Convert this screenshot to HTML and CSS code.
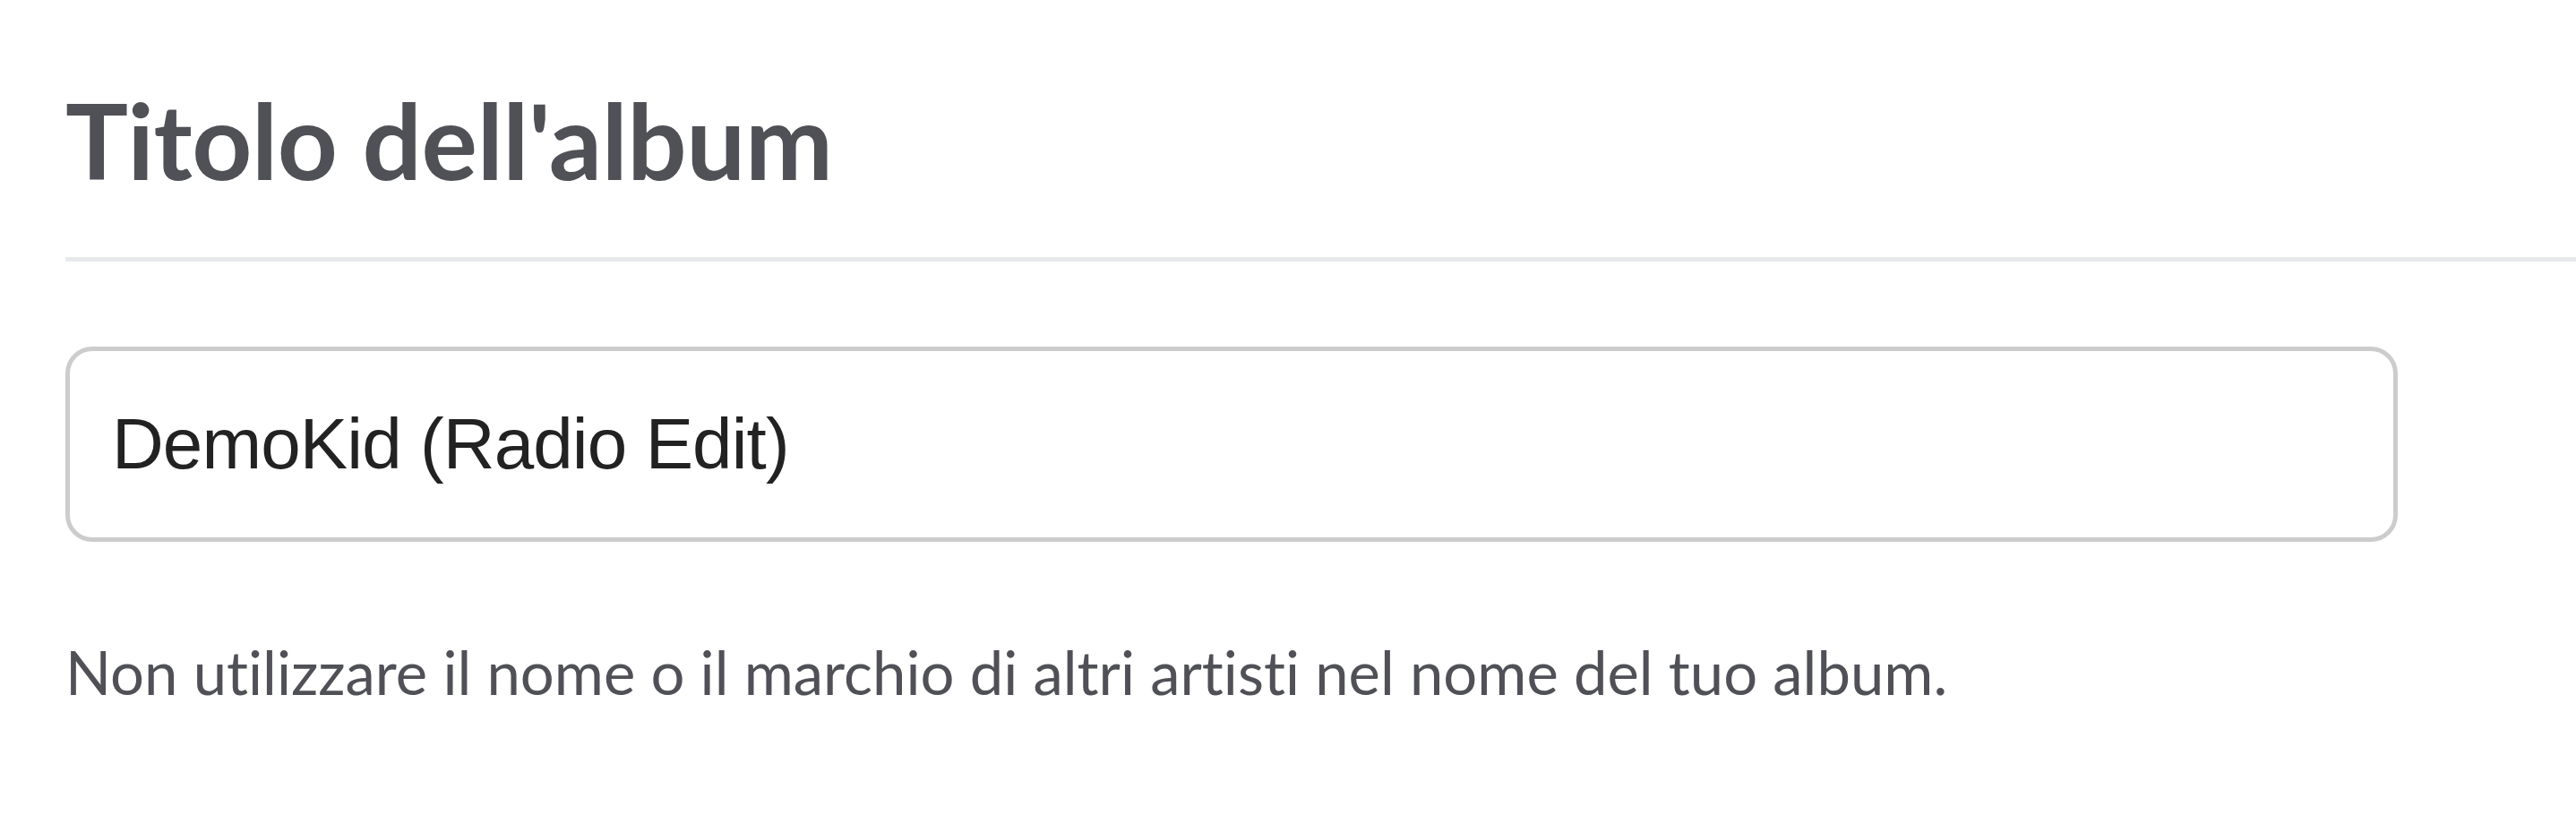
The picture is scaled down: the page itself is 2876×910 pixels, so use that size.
FILE: index.html
```html
<!DOCTYPE html>
<html lang="it">
<head>
<meta charset="utf-8">
<title>Titolo dell'album</title>
<link rel="stylesheet" href="styles.css">
</head>
<body>
<section class="field">
  <h2 class="field-title">Titolo dell'album</h2>
  <div class="field-rule"></div>
  <input class="field-input" type="text" value="DemoKid (Radio Edit)">
  <p class="field-help">Non utilizzare il nome o il marchio di altri artisti nel nome del tuo album.</p>
</section>
</body>
</html>
```
FILE: styles.css
```css
html, body {
  margin: 0;
  padding: 0;
  background: #ffffff;
}

.field {
  padding-left: 73px;
  padding-top: 86px;
  display: flex;
  flex-direction: column;
  align-items: flex-start;
  font-variant-ligatures: none;
}

.field-title {
  margin: 0;
  font-family: Lato, "Open Sans", sans-serif;
  font-weight: 700;
  font-size: 117px;
  letter-spacing: -0.4px;
  line-height: 1.2;
  color: #505157;
}

.field-rule {
  align-self: stretch;
  height: 5px;
  margin-top: 61px;
  background: #e8e9ed;
}

.field-input {
  box-sizing: border-box;
  margin: 95px 0 0;
  width: 2604px;
  height: 218px;
  padding: 0 47px;
  border: 5px solid #cccccc;
  border-radius: 30px;
  background: #ffffff;
  font-family: "Liberation Sans", Arial, sans-serif;
  font-size: 80px;
  letter-spacing: -0.9px;
  color: #222222;
  outline: none;
  font-variant-ligatures: none;
}

.field-help {
  margin: 105px 0 0;
  font-family: Lato, "Open Sans", sans-serif;
  font-weight: 400;
  font-size: 67px;
  line-height: 1.2;
  color: #505157;
}
```
